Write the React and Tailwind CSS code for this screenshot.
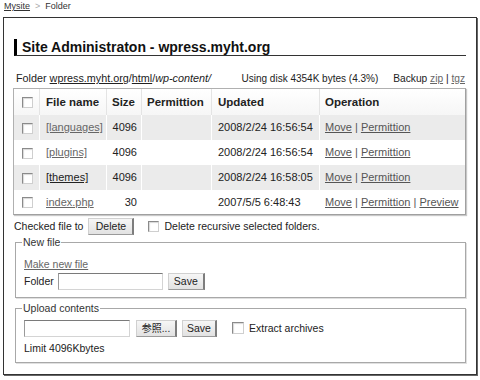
import React from "react";

function Check({ className = "" }) {
  return (
    <span
      className={
        "inline-block w-[11px] h-[11px] bg-white border border-t-[#8a8a8a] border-l-[#8a8a8a] border-r-[#cfcfcf] border-b-[#cfcfcf] shadow-[inset_1px_1px_1px_#d8d8d8] align-middle " +
        className
      }
    />
  );
}

function Btn({ children, className = "" }) {
  return (
    <span
      className={
        "inline-flex items-center justify-center h-[17px] bg-gradient-to-b from-[#f6f6f6] to-[#e2e2e2] border border-t-[#d0d0d0] border-l-[#d0d0d0] border-r-[#7d7d7d] border-r-2 border-b-[#9a9a9a] text-[10.5px] leading-[13px] text-[#222] " +
        className
      }
    >
      {children}
    </span>
  );
}

function Input({ className = "" }) {
  return (
    <span
      className={
        "inline-block h-[17px] bg-white border border-t-[#7a7a7a] border-l-[#9a9a9a] border-r-[#d4d4d4] border-b-[#d4d4d4] " +
        className
      }
    />
  );
}

const rows = [
  { name: "[languages]", size: "4096", date: "2008/2/24 16:56:54", ops: ["Move", "Permittion"], gray: true },
  { name: "[plugins]", size: "4096", date: "2008/2/24 16:56:54", ops: ["Move", "Permittion"], gray: false },
  { name: "[themes]", size: "4096", date: "2008/2/24 16:58:05", ops: ["Move", "Permittion"], gray: true, dark: true },
  { name: "index.php", size: "30", date: "2007/5/5 6:48:43", ops: ["Move", "Permittion", "Preview"], gray: false, last: true },
];

export default function App() {
  return (
    <div className="w-[480px] h-[380px] bg-white overflow-hidden font-['Liberation_Sans',Arial,'Noto_Sans_CJK_JP',sans-serif] text-[#222]">
      <div className="h-[17px] pl-[4px] pt-[1px] text-[9px] leading-[11px] text-[#333]">
        <span className="underline text-[#333]">Mysite</span>
        <span className="text-[#aaa] mx-[5px]">&gt;</span>
        <span>Folder</span>
      </div>

      <div className="ml-[3px] w-[474px] h-[358px] border border-[#333] shadow-[1px_1px_0_#666] pl-[9px] pr-[10px]">
        <div className="mt-[21px] ml-[1px] h-[17px] border-l-[3px] border-l-black border-b border-b-[#333] flex items-center pl-[5px] text-[14px] font-bold leading-[16px] text-[#111]">
          Site Administraton - wpress.myht.org
        </div>

        <div className="mt-[16px] pl-[3px] pr-[1px] flex items-baseline leading-[13px] text-[#222]">
          <span className="text-[10.8px]">
            Folder <span className="underline">wpress.myht.org</span>/<span className="underline">html</span>/<span className="italic">wp-content/</span>
          </span>
          <span className="ml-auto text-[10px]">Using disk 4354K bytes (4.3%)</span>
          <span className="ml-[15px] text-[10.2px]">
            Backup <span className="underline text-[#666]">zip</span> | <span className="underline text-[#666]">tgz</span>
          </span>
        </div>

        <table className="mt-[3px] w-[453px] table-fixed border-separate border-spacing-0 border border-t-[#b0b0b0] border-l-[#b0b0b0] border-r-[#a0a0a0] border-b-[#a0a0a0] shadow-[1px_1px_1px_#c8c8c8] text-[11px] leading-[13px]">
          <colgroup>
            <col className="w-[26px]" />
            <col className="w-[67px]" />
            <col className="w-[35px]" />
            <col className="w-[70px]" />
            <col className="w-[108px]" />
            <col className="w-[145px]" />
          </colgroup>
          <thead>
            <tr className="h-[26px] bg-gradient-to-b from-white to-[#f6f6f6]">
              <th className="border-r border-r-[#e4e4e4] pl-[8px] text-left font-normal">
                <Check />
              </th>
              <th className="border-r border-r-[#e4e4e4] pl-[6px] text-left font-bold text-[11.5px]">File name</th>
              <th className="border-r border-r-[#e4e4e4] pl-[5px] text-left font-bold text-[11.5px]">Size</th>
              <th className="border-r border-r-[#e4e4e4] pl-[5px] text-left font-bold text-[11.5px]">Permittion</th>
              <th className="border-r border-r-[#e4e4e4] pl-[6px] text-left font-bold text-[11.5px]">Updated</th>
              <th className="pl-[5px] text-left font-bold text-[11.5px]">Operation</th>
            </tr>
          </thead>
          <tbody>
            {rows.map((r, i) => (
              <tr key={i} className={(r.last ? "h-[24px] " : "h-[25px] ") + (r.gray ? "bg-[#ebebeb]" : "bg-white")}>
                <td className={"pl-[8px] border-r " + (r.gray ? "border-r-white" : "border-r-transparent")}>
                  <Check />
                </td>
                <td className={"pl-[6px] border-r " + (r.gray ? "border-r-white" : "border-r-transparent")}>
                  <span className={"underline " + (r.dark ? "text-[#222]" : "text-[#666]")}>{r.name}</span>
                </td>
                <td className={"pr-[4px] text-right border-r " + (r.gray ? "border-r-white" : "border-r-transparent")}>{r.size}</td>
                <td className={"border-r " + (r.gray ? "border-r-white" : "border-r-transparent")}></td>
                <td className={"pl-[6px] border-r whitespace-nowrap " + (r.gray ? "border-r-white" : "border-r-transparent")}>{r.date}</td>
                <td className="pl-[5px] whitespace-nowrap text-[#555]">
                  {r.ops.map((o, j) => (
                    <React.Fragment key={o}>
                      {j > 0 && <span className="text-[#555]"> | </span>}
                      <span className="underline">{o}</span>
                    </React.Fragment>
                  ))}
                </td>
              </tr>
            ))}
          </tbody>
        </table>

        <div className="mt-[3px] h-[17px] flex items-center text-[10.5px] leading-[13px] pl-[1px]">
          <span>Checked file to</span>
          <Btn className="ml-[5px] w-[46px]">Delete</Btn>
          <Check className="ml-[14px]" />
          <span className="ml-[5px]">Delete recursive selected folders.</span>
        </div>

        <fieldset className="mt-[1px] ml-[2px] w-[451px] border border-[#a8a8a8] shadow-[1px_1px_0_#e0e0e0] px-[8px] pb-[7px] text-[10.5px] leading-[13px]">
          <legend className="ml-[-2px] px-[1px] text-[#333]">New file</legend>
          <div className="mt-[9px]">
            <span className="underline text-[#666]">Make new file</span>
          </div>
          <div className="mt-[1px] h-[18px] flex items-center">
            <span>Folder</span>
            <Input className="ml-[4px] w-[105px]" />
            <Btn className="ml-[5px] w-[37px]">Save</Btn>
          </div>
        </fieldset>

        <fieldset className="mt-[4px] ml-[2px] w-[451px] border border-[#a8a8a8] shadow-[1px_1px_0_#e0e0e0] px-[8px] pb-[7px] text-[10.5px] leading-[13px]">
          <legend className="ml-[-2px] px-[1px] text-[#333]">Upload contents</legend>
          <div className="mt-[4px] h-[18px] flex items-center">
            <Input className="w-[106px]" />
            <Btn className="ml-[6px] w-[41px] text-[10px]">参照...</Btn>
            <Btn className="ml-[5px] w-[35px]">Save</Btn>
            <Check className="ml-[15px] w-[12px] h-[12px]" />
            <span className="ml-[5px]">Extract archives</span>
          </div>
          <div className="mt-[5px]">Limit 4096Kbytes</div>
        </fieldset>
      </div>
    </div>
  );
}
